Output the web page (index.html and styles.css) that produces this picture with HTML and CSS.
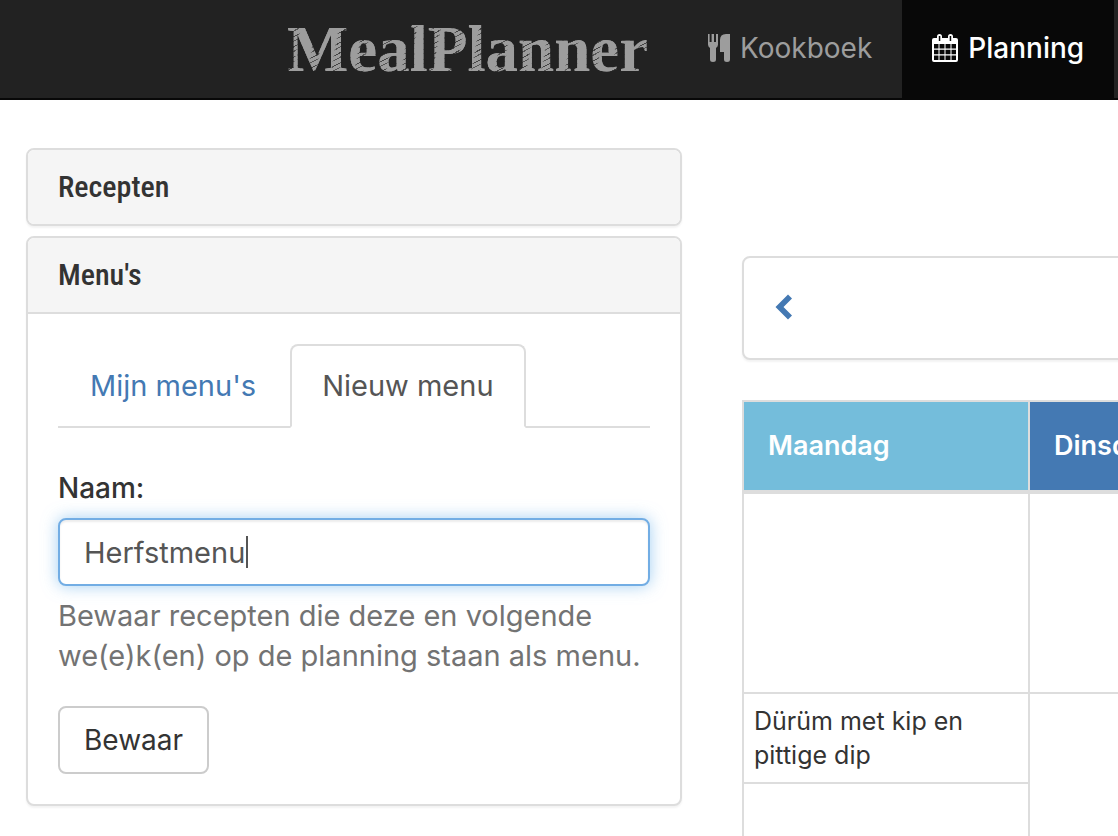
FILE: index.html
```html
<!DOCTYPE html>
<html lang="nl">
<head>
<meta charset="utf-8">
<meta name="viewport" content="width=device-width, initial-scale=1">
<title>MealPlanner</title>
<link rel="stylesheet" href="styles.css">
</head>
<body>
<header class="navbar">
  <a class="brand" href="#">MealPlanner</a>
  <nav class="nav">
    <a class="nav-link" href="#kookboek">
      <svg class="icon-cutlery" viewBox="0 0 22 28" aria-hidden="true"><path fill="currentColor" d="M0 0h1.600v8h2V0h2.400v8h2V0H10v10.500q0 2-2 3.500v11.500q0 2.500-3 2.500t-3-2.500V14q-2-1.500-2-3.500zM18 0h4v25.500q0 2.500-3 2.500t-3-2.500V18h-4V6q0-6 6-6z"/></svg>
      <span>Kookboek</span>
    </a>
    <a class="nav-link active" href="#planning" aria-current="page">
      <svg class="icon-calendar" viewBox="0 0 26 28" aria-hidden="true"><path fill="currentColor" fill-rule="evenodd" d="M2 4h3V2.500a2.500 2.500 0 0 1 5 0V4h6V2.500a2.500 2.500 0 0 1 5 0V4h3a2 2 0 0 1 2 2v20a2 2 0 0 1-2 2H2a2 2 0 0 1-2-2V6a2 2 0 0 1 2-2zM6.800 2v5h1.500V2zM17.700 2v5h1.500V2zM2 10v4.500h4.500V10zM7.500 10v4.500h5V10zM13.500 10v4.500h5V10zM19.500 10v4.500H24V10zM2 15.700v4.600h4.500v-4.600zM7.500 15.700v4.600h5v-4.600zM13.500 15.700v4.600h5v-4.600zM19.500 15.700v4.600H24v-4.600zM2 21.500V26h4.500v-4.500zM7.500 21.500V26h5v-4.500zM13.500 21.500V26h5v-4.500zM19.500 21.500V26H24v-4.500z"/></svg>
      <span>Planning</span>
    </a>
  </nav>
</header>
<main class="layout">
  <aside class="sidebar">
    <section class="panel">
      <h2 class="panel-title">Recepten</h2>
    </section>
    <section class="panel">
      <h2 class="panel-title divided">Menu's</h2>
      <div class="panel-body">
        <div class="tabs">
          <a class="tab" href="#mijn">Mijn menu's</a>
          <a class="tab selected" href="#nieuw">Nieuw menu</a>
        </div>
        <form class="form">
          <label class="label" for="naam">Naam:</label>
          <input class="input" id="naam" type="text" value="Herfstmenu" aria-describedby="hulp">
          <p class="help" id="hulp">Bewaar recepten die deze en volgende we(e)k(en) op de planning staan als menu.</p>
          <button class="button" type="button">Bewaar</button>
        </form>
      </div>
    </section>
  </aside>
  <section class="planner">
    <div class="week-bar">
      <button class="previous" type="button" aria-label="Vorige week">
        <svg class="icon-chevron" viewBox="0 0 18 28" aria-hidden="true"><path fill="currentColor" d="M14 .500L18 4.500 9.500 13l8.500 8.500-4 4L1.500 13z"/></svg>
      </button>
    </div>
    <table class="week">
      <thead>
        <tr><th class="monday" scope="col">Maandag</th><th class="tuesday" scope="col">Dinsdag</th></tr>
      </thead>
      <tbody>
        <tr class="slot"><td></td><td></td></tr>
        <tr><td>Dürüm met kip en pittige dip</td><td rowspan="2"></td></tr>
        <tr class="slot"><td></td></tr>
      </tbody>
    </table>
  </section>
</main>
</body>
</html>
```
FILE: styles.css
```css
* { box-sizing: border-box; }

body {
  margin: 0;
  overflow: hidden;
  background: #fff;
  color: #333;
  font: 29px/40px Inter, "Open Sans", sans-serif;
}

a { text-decoration: none; }

.navbar {
  display: flex;
  align-items: stretch;
  height: 100px;
  padding-left: 287px;
  background: #222;
  border-bottom: 2px solid #080808;
}

.brand {
  padding-right: 30px;
  color: #9d9d9d;
  font: bold 65px/98px "Liberation Serif", serif;
  background:
    repeating-linear-gradient(100deg, #9d9d9d 0 9px, transparent 11px 17px, #9d9d9d 19px 23px),
    repeating-linear-gradient(152deg, #9d9d9d 0 3px, #555 3px 4px, #9d9d9d 4px 8px, #444 8px 9px);
  background-clip: text;
  -webkit-text-fill-color: transparent;
}

.nav {
  display: flex;
  font-size: 28px;
}

.nav-link {
  display: flex;
  align-items: center;
  gap: 10px;
  padding: 0 30px 2px;
  color: #9d9d9d;
}

.nav-link.active {
  background: #080808;
  color: #fff;
  font-weight: 500;
}

.icon-cutlery { width: 22px; height: 28px; }
.icon-calendar { width: 26px; height: 28px; }

.layout {
  display: grid;
  grid-template-columns: minmax(0, 656fr) minmax(0, 376fr);
  align-items: start;
  gap: 60px;
  padding: 48px 0 30px 26px;
}

.sidebar {
  display: flex;
  flex-direction: column;
  gap: 10px;
}

.panel, .week-bar {
  background: #fff;
  border: 2px solid #ddd;
  border-radius: 8px;
  box-shadow: 0 2px 2px rgba(0, 0, 0, .05);
}

.panel { overflow: hidden; }

.panel-title {
  margin: 0;
  padding: 17px 30px;
  background: #f5f5f5;
  font: 500 30px/40px "Roboto Condensed", Roboto, sans-serif;
}

.divided { border-bottom: 2px solid #ddd; }

.panel-body { padding: 30px; }

.tabs {
  display: flex;
  gap: 2px;
  border-bottom: 2px solid #ddd;
}

.tab {
  margin-bottom: -2px;
  padding: 20px 30px;
  border: 2px solid transparent;
  border-radius: 8px 8px 0 0;
  color: #4479b3;
}

.tab.selected {
  border-color: #ddd #ddd #fff;
  background: #fff;
  color: #555;
}

.form { margin-top: 40px; }

.label {
  display: block;
  margin-bottom: 10px;
  font-size: 28px;
  font-weight: 500;
}

.input {
  display: block;
  width: 100%;
  height: 68px;
  padding: 12px 24px;
  border: 2px solid #72ade4;
  border-radius: 8px;
  outline: 0;
  background: linear-gradient(#555, #555) 186px 50% / 2px 32px no-repeat #fff;
  box-shadow: inset 0 2px 2px rgba(0, 0, 0, .075), 0 0 16px rgba(102, 175, 233, .6);
  color: #555;
  font: inherit;
}

.help {
  margin: 10px 0 30px;
  color: #737373;
}

.button {
  height: 68px;
  padding: 12px 24px;
  border: 2px solid #ccc;
  border-radius: 8px;
  background: #fff;
  color: #333;
  font: inherit;
  font-size: 28px;
}

.planner {
  width: max-content;
  padding-top: 108px;
}

.week-bar {
  margin-bottom: 40px;
  padding: 30px;
}

.previous {
  display: flex;
  align-items: center;
  height: 40px;
  padding: 0;
  border: 0;
  background: none;
  color: #4479b3;
}

.icon-chevron { width: 18px; height: 28px; }

.week {
  width: 574px;
  table-layout: fixed;
  border-collapse: collapse;
}

.week th {
  height: 91px;
  padding: 0 24px;
  border: 2px solid #ddd;
  border-bottom-width: 4px;
  color: #fff;
  font-size: 27px;
  font-weight: 600;
  text-align: left;
}

.monday { background: #74bddb; }
.tuesday { background: #4479b3; }

.week td {
  padding: 10px;
  border: 2px solid #ddd;
  font-size: 25px;
  line-height: 34px;
  vertical-align: top;
}

.slot { height: 201px; }
```
